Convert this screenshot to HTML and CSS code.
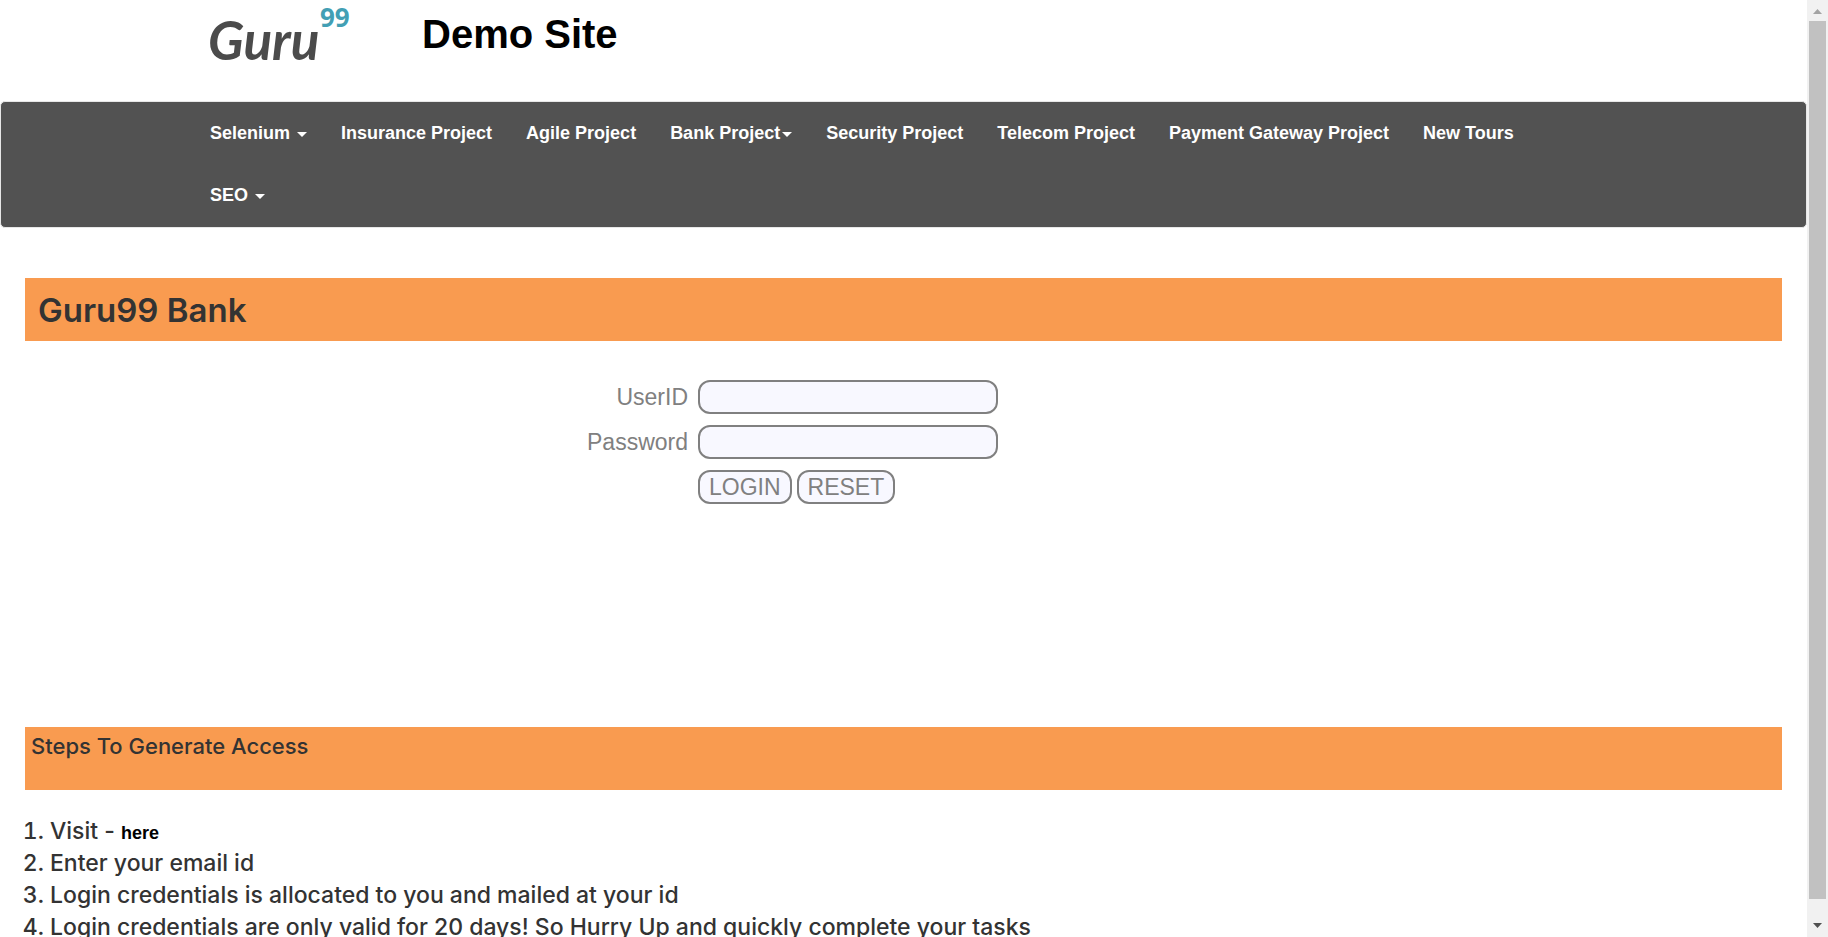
FILE: index.html
```
<!DOCTYPE html>
<html lang="en">
<head>
<meta charset="utf-8">
<title>Guru99 Bank Home Page</title>
<link rel="stylesheet" href="styles.css">
</head>
<body>
<div class="page">
  <header class="header">
    <a class="logo" href="#" aria-label="Guru99">
      <svg width="145" height="80" viewBox="0 0 145 80" aria-hidden="true">
        <text class="logo-name" x="0" y="60">Guru</text>
        <text class="logo-number" x="112" y="27">99</text>
      </svg>
    </a>
    <h2 class="site-title">Demo Site</h2>
  </header>
  <nav class="nav">
    <ul class="nav-list">
      <li><a href="#">Selenium <span class="caret"></span></a></li>
      <li><a href="#">Insurance Project</a></li>
      <li><a href="#">Agile Project</a></li>
      <li><a href="#">Bank Project<span class="caret"></span></a></li>
      <li><a href="#">Security Project</a></li>
      <li><a href="#">Telecom Project</a></li>
      <li><a href="#">Payment Gateway Project</a></li>
      <li><a href="#">New Tours</a></li>
      <li><a href="#">SEO <span class="caret"></span></a></li>
    </ul>
  </nav>
  <main class="content">
    <h1 class="bar bank-title">Guru99 Bank</h1>
    <form class="login">
      <label for="uid">UserID</label>
      <input class="field" id="uid" type="text">
      <label for="password">Password</label>
      <input class="field" id="password" type="password">
      <div class="actions">
        <button type="button">LOGIN</button>
        <button type="reset">RESET</button>
      </div>
    </form>
    <h2 class="bar steps-title">Steps To Generate Access</h2>
    <ol class="steps">
      <li>Visit - <a href="#">here</a></li>
      <li>Enter your email id</li>
      <li>Login credentials is allocated to you and mailed at your id</li>
      <li>Login credentials are only valid for 20 days! So Hurry Up and quickly complete your tasks</li>
    </ol>
  </main>
</div>
<div class="scrollbar" aria-hidden="true">
  <svg class="arrow up" width="9" height="5" viewBox="0 0 9 5"><path d="M0 5 4.500 0 9 5Z"/></svg>
  <div class="thumb"></div>
  <svg class="arrow down" width="9" height="5" viewBox="0 0 9 5"><path d="M0 0H9L4.500 5Z"/></svg>
</div>
</body>
</html>
```
FILE: styles.css
```
* { box-sizing: border-box; }

body {
  margin: 0;
  height: 100vh;
  overflow: hidden;
  display: flex;
  background: #fff;
  color: #333;
  font-family: "Liberation Sans", Arial, sans-serif;
}

.page { flex: 1; min-width: 0; }

.header {
  display: flex;
  align-items: flex-start;
  gap: 69px;
  height: 101px;
  padding-left: 208px;
}

.logo { display: block; height: 80px; }

.logo-name {
  fill: #4b4b4b;
  font: italic 700 53px Lato, sans-serif;
}

.logo-number {
  fill: #429fb4;
  font: 700 26px "Noto Sans", sans-serif;
}

.site-title {
  margin: 0;
  padding-top: 12px;
  color: #000;
  font-size: 40px;
  line-height: 44px;
}

.nav {
  padding: 0 240px 1px 192px;
  border: 1px solid #e7e7e7;
  border-radius: 5px;
  background: #525252;
}

.nav-list {
  display: flex;
  flex-wrap: wrap;
  margin: 0;
  padding: 0;
  list-style: none;
}

.nav-list a {
  display: block;
  padding: 18px 17px;
  color: #fff;
  font-size: 18px;
  font-weight: 700;
  line-height: 26px;
  text-decoration: none;
}

.caret {
  display: inline-block;
  margin-left: 2px;
  vertical-align: middle;
  border: 5px solid transparent;
  border-top-color: #fff;
  border-bottom: 0;
}

.content { padding: 50px 25px 0; }

.bar {
  margin: 0;
  height: 63px;
  background: #f99b50;
  font-family: Inter, sans-serif;
}

.bank-title {
  padding-left: 13px;
  font-size: 33px;
  font-weight: 600;
  line-height: 64px;
}

.login {
  display: grid;
  grid-template-columns: 663px 300px;
  grid-auto-rows: 34px;
  gap: 11px 10px;
  margin-top: 39px;
  height: 347px;
  align-content: start;
  color: #808080;
  font-size: 23px;
  line-height: 34px;
}

.login label { text-align: right; }

.field,
.login button {
  height: 34px;
  padding: 0 9px;
  border: 2px solid #808080;
  border-radius: 12px;
  background: #f8f8ff;
  color: #808080;
  font-family: inherit;
  font-size: 23px;
  line-height: 30px;
}

.field { width: 100%; }

.actions {
  grid-column: 2;
  display: flex;
  gap: 5px;
}

.steps-title {
  padding: 5px 6px;
  font-size: 22px;
  font-weight: 500;
  line-height: 28px;
}

.steps {
  margin: 25px 0 0;
  padding-left: 25px;
  font-family: Inter, sans-serif;
  font-size: 23px;
  font-weight: 500;
  line-height: 32px;
}

.steps a {
  color: #000;
  font-family: "Liberation Sans", Arial, sans-serif;
  font-size: 18px;
  font-weight: 700;
  line-height: 20px;
  text-decoration: none;
}

.scrollbar {
  display: flex;
  flex-direction: column;
  align-items: center;
  width: 21px;
  padding: 9px 0;
  background: #f1f1f1;
}

.thumb {
  flex: 1;
  width: 17px;
  margin: 7px 0 24px;
  background: #c1c1c1;
}

.arrow { flex: none; }
.up { fill: #a3a3a3; }
.down { fill: #505050; }
```
